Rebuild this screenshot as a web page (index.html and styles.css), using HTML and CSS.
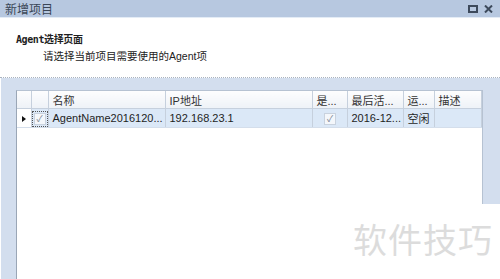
FILE: index.html
```html
<!DOCTYPE html>
<html>
<head>
    <link rel="stylesheet" href="styles.css">
</head>
<body>
    <div class="dialog">
        <!-- Title Bar -->
        <div class="title-bar">
            <span class="title">新增项目</span>
            <div class="title-buttons">
                <svg width="10" height="8" viewBox="0 0 10 8"><rect x="1" y="1" width="8" height="6" fill="none" stroke="#3d4a5c" stroke-width="2"/></svg>
                <svg width="9" height="8" viewBox="0 0 9 8"><path d="M1 0.5 L8 7.5 M8 0.5 L1 7.5" stroke="#3d4a5c" stroke-width="2"/></svg>
            </div>
        </div>

        <!-- Page Header -->
        <div class="page-header">
            <div class="page-title">Agent选择页面</div>
            <div class="page-desc">请选择当前项目需要使用的Agent项</div>
        </div>

        <!-- Agent Grid -->
        <div class="content">
            <div class="grid">
                <table>
                    <colgroup>
                        <col style="width:14px">
                        <col style="width:17px">
                        <col style="width:117px">
                        <col style="width:147px">
                        <col style="width:35px">
                        <col style="width:56px">
                        <col style="width:31px">
                        <col>
                    </colgroup>
                    <thead>
                        <tr>
                            <th></th>
                            <th></th>
                            <th>名称</th>
                            <th>IP地址</th>
                            <th>是...</th>
                            <th>最后活...</th>
                            <th>运...</th>
                            <th>描述</th>
                        </tr>
                    </thead>
                    <tbody>
                        <tr class="selected">
                            <td class="row-head"><span class="arrow"></span></td>
                            <td class="check-cell"><span class="check focus">&#10003;</span></td>
                            <td>AgentName2016120...</td>
                            <td>192.168.23.1</td>
                            <td class="center"><span class="check">&#10003;</span></td>
                            <td>2016-12...</td>
                            <td>空闲</td>
                            <td></td>
                        </tr>
                    </tbody>
                </table>
            </div>
        </div>

        <!-- Watermark -->
        <div class="watermark">软件技巧</div>
    </div>
</body>
</html>
```

FILE: styles.css
```css
body {
    margin: 0;
    width: 500px;
    height: 279px;
    overflow: hidden;
    font-family: "Liberation Sans", "Noto Sans CJK SC", sans-serif;
    color: #1e1e1e;
}

.dialog {
    position: relative;
    display: flex;
    flex-direction: column;
    height: 279px;
    background: #d3deee;
}

.title-bar {
    height: 17px;
    background: #b7c8e0;
    border-bottom: 1px solid #e4ecf6;
    display: flex;
    align-items: center;
    justify-content: space-between;
    padding: 0 7px 0 5px;
}

.title {
    font-size: 12px;
    color: #3a4656;
}

.title-buttons {
    display: flex;
    gap: 6px;
    align-items: center;
}

.page-header {
    height: 59px;
    background: #fff;
    border-bottom: 1px dotted #a9b3c0;
    padding-left: 16px;
}

.page-title {
    font-size: 10px;
    font-weight: bold;
    font-family: "DejaVu Sans Mono", "Noto Sans CJK SC", monospace;
    margin-top: 13px;
    letter-spacing: -0.4px;
}

.page-desc {
    font-size: 10.5px;
    margin-top: 2px;
    padding-left: 27px;
    color: #222;
}

.content {
    flex: 1;
    display: flex;
    padding: 12px 17px 0 15px;
    border-left: 1px solid #fff;
    min-height: 0;
}

.grid {
    flex: 1;
    background: #fff;
    border-left: 1px solid #9aa6b6;
    border-top: 1px solid #b6c2d2;
    border-right: 1px solid #b6c2d2;
}

table {
    width: 100%;
    border-collapse: collapse;
    table-layout: fixed;
    font-size: 11px;
}

th, td {
    height: 17px;
    padding: 0 3px 0 4px;
    text-align: left;
    white-space: nowrap;
    overflow: hidden;
    border-right: 1px solid #c6d0dd;
}

th {
    font-weight: normal;
    color: #333;
    background: linear-gradient(#fdfdfe, #eef2f7);
    border-bottom: 1px solid #c6d0dd;
}

td {
    height: 18px;
    border-bottom: 1px solid #d4deeb;
}

tr.selected td {
    background: #dbe8f7;
}

tr.selected td.row-head {
    background: #fff;
}

.row-head {
    padding: 0;
    text-align: center;
}

.arrow {
    display: inline-block;
    width: 0;
    height: 0;
    border-top: 3px solid transparent;
    border-bottom: 3px solid transparent;
    border-left: 4px solid #111;
    vertical-align: middle;
}

.check-cell {
    padding: 0 2px;
}

.check {
    display: inline-block;
    width: 10px;
    height: 10px;
    line-height: 10px;
    font-size: 9px;
    text-align: center;
    color: #7a8594;
    border: 1px solid #c9d2de;
    background: #f4f7fb;
    vertical-align: middle;
}

.check.focus {
    outline: 1px dotted #555;
    outline-offset: 1px;
}

.center {
    text-align: center;
}

.watermark {
    position: absolute;
    left: 300px;
    top: 204px;
    right: 0;
    bottom: 0;
    background: #fff;
    color: #dcdcdc;
    font-family: "Noto Sans CJK SC", sans-serif;
    font-size: 34px;
    padding: 10px 0 0 53px;
    letter-spacing: 1px;
}
```
